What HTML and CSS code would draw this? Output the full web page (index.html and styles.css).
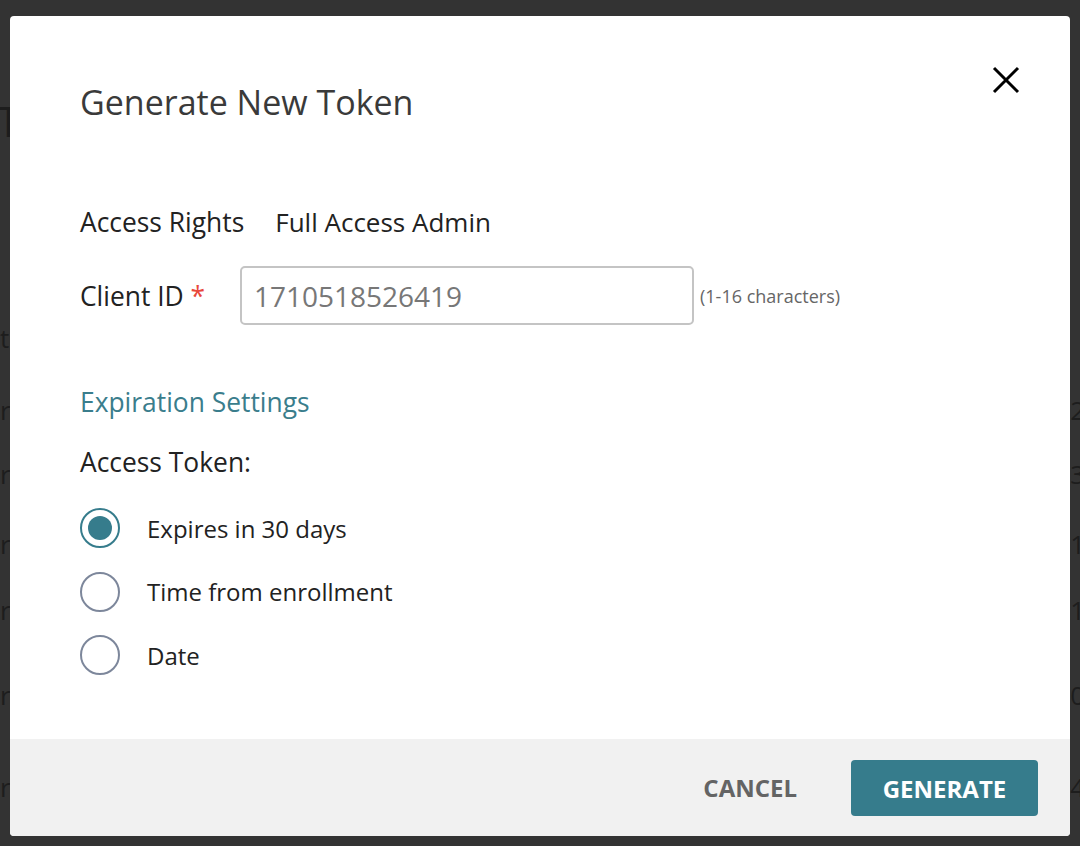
FILE: index.html
```html
<!DOCTYPE html>
<html>
<head>
<meta charset="utf-8">
<link rel="stylesheet" href="styles.css">
</head>
<body>
<div class="page">
  <div class="page-title">Tokens</div>
  <div class="page-rows">
    <div class="prow r1"><span>tion</span><span></span></div>
    <div class="prow r2"><span>rw</span><span>2</span></div>
    <div class="prow r3"><span>rw</span><span>3</span></div>
    <div class="prow r4"><span>rw</span><span>1</span></div>
    <div class="prow r5"><span>rw</span><span>1</span></div>
    <div class="prow r6"><span>rw</span><span>0</span></div>
    <div class="prow r7"><span>rw</span><span>4</span></div>
  </div>
</div>
<div class="modal">
  <div class="modal-body">
    <div class="modal-head">
      <h1 class="modal-title">Generate New Token</h1>
      <button class="close" aria-label="Close">
        <svg width="28" height="28" viewBox="0 0 28 28"><path d="M2 2 L26 26 M26 2 L2 26" stroke="#000" stroke-width="3" stroke-linecap="butt" fill="none"/></svg>
      </button>
    </div>
    <div class="row rights">
      <span class="label">Access Rights</span>
      <span class="value">Full Access Admin</span>
    </div>
    <div class="row client">
      <span class="label">Client ID <span class="req">*</span></span>
      <div class="input">1710518526419</div>
      <span class="hint">(1-16 characters)</span>
    </div>
    <h2 class="section">Expiration Settings</h2>
    <div class="sub">Access Token:</div>
    <div class="radios">
      <label class="radio checked"><span class="circle"><span class="dot"></span></span><span>Expires in 30 days</span></label>
      <label class="radio"><span class="circle"></span><span>Time from enrollment</span></label>
      <label class="radio"><span class="circle"></span><span>Date</span></label>
    </div>
  </div>
  <div class="modal-foot">
    <button class="btn cancel">CANCEL</button>
    <button class="btn primary">GENERATE</button>
  </div>
</div>
</body>
</html>
```
FILE: styles.css
```css
* { box-sizing: border-box; }
html, body { margin: 0; padding: 0; }
body {
  width: 1080px;
  height: 846px;
  overflow: hidden;
  background: #333333;
  font-family: "Open Sans", "Liberation Sans", sans-serif;
  position: relative;
}
.page {
  color: #1d1d1d;
  font-size: 26px;
}
.page-title {
  font-size: 42px;
  line-height: 50px;
  padding-top: 96px;
  margin-left: -3px;
}
.page-rows {
  display: flex;
  flex-direction: column;
  padding-top: 177px;
}
.prow {
  display: flex;
  justify-content: space-between;
  height: 66px;
  line-height: 30px;
  width: 1085px;
}
.r1 { height: 72px; }
.r2 { height: 64px; }
.r3 { height: 70px; }
.r4 { height: 66px; }
.r5 { height: 85px; }
.r6 { height: 92px; }
.modal {
  position: absolute;
  left: 10px;
  top: 16px;
  width: 1060px;
  height: 820px;
  background: #fff;
  border-radius: 4px;
  overflow: hidden;
  display: flex;
  flex-direction: column;
}
.modal-body {
  flex: 1;
  padding: 0 50px 0 70px;
  color: #222;
}
.modal-head {
  display: flex;
  justify-content: space-between;
  align-items: flex-start;
}
.modal-title {
  margin: 64px 0 0 0;
  font-size: 34px;
  font-weight: 400;
  line-height: 44px;
  color: #3a3a3a;
}
.close {
  margin-top: 50px;
  margin-right: 0;
  background: none;
  border: 0;
  padding: 0;
  width: 28px;
  height: 28px;
}
.close svg { display: block; }
.row {
  display: flex;
  align-items: center;
  font-size: 26.4px;
}
.rights {
  margin-top: 78px;
  height: 40px;
  gap: 31px;
}
.rights .value { font-size: 26px; }
.client {
  margin-top: 24px;
}
.client .label { width: 160px; }
.req { color: #e8483c; }
.input {
  width: 454px;
  height: 59px;
  border: 2px solid #c4c4c4;
  border-radius: 5px;
  color: #777;
  font-size: 28px;
  padding-left: 12px;
  display: flex;
  align-items: center;
}
.hint {
  font-size: 18px;
  color: #666;
  margin-left: 6px;
}
.section {
  margin: 57px 0 0 0;
  font-size: 26.4px;
  font-weight: 400;
  line-height: 40px;
  color: #3a7d8c;
}
.sub {
  margin-top: 20px;
  font-size: 26.4px;
  line-height: 40px;
}
.radios {
  margin-top: 26px;
  display: flex;
  flex-direction: column;
  gap: 23.5px;
}
.radio {
  display: flex;
  align-items: center;
  gap: 27px;
  font-size: 24px;
  height: 40px;
}
.circle {
  width: 40px;
  height: 40px;
  border-radius: 50%;
  border: 2px solid #7d879b;
  display: flex;
  align-items: center;
  justify-content: center;
  flex: none;
}
.radio.checked .circle { border-color: #367c8c; }
.dot {
  width: 24px;
  height: 24px;
  border-radius: 50%;
  background: #367c8c;
}
.modal-foot {
  height: 97px;
  background: #f1f1f1;
  display: flex;
  align-items: center;
  justify-content: flex-end;
  padding-right: 32px;
  gap: 54px;
}
.btn {
  font-family: "Open Sans", "Liberation Sans", sans-serif;
  font-weight: 700;
  font-size: 24px;
  border: 0;
  border-radius: 4px;
  cursor: pointer;
}
.cancel {
  background: none;
  color: #646464;
  padding: 0;
}
.primary {
  background: #367c8c;
  color: #fff;
  width: 187px;
  height: 56px;
  margin-top: 1px;
}
```
